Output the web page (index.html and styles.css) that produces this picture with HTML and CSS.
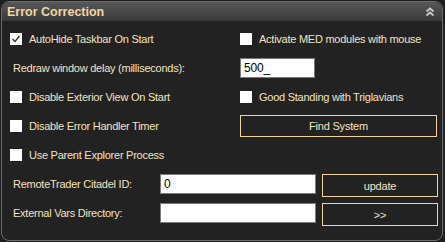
FILE: index.html
```html
<!DOCTYPE html>
<html lang="en">
<head>
    <meta charset="UTF-8">
    <title>Error Correction</title>
    <link rel="stylesheet" href="styles.css">
</head>
<body>
    <div class="panel">
        <div class="panel-head">
            <span class="title">Error Correction</span>
            <svg class="collapse" width="10" height="10" viewBox="0 0 10 10">
                <path d="M1.5 4.5 L5 1.5 L8.5 4.5 M1.5 8.5 L5 5.5 L8.5 8.5" fill="none" stroke="#c8c8c8" stroke-width="1.8"/>
            </svg>
        </div>

        <div class="panel-body">
            <div class="row">
                <label class="check left"><span class="box checked">
                    <svg width="12" height="12" viewBox="0 0 12 12"><path d="M2.5 6 L5 8.5 L9.5 3" fill="none" stroke="#333" stroke-width="1.3"/></svg>
                </span>AutoHide Taskbar On Start</label>
                <label class="check right"><span class="box"></span>Activate MED modules with mouse</label>
            </div>

            <div class="row">
                <span class="label left">Redraw window delay (milliseconds):</span>
                <div class="right"><input class="field small" type="text" value="500_"></div>
            </div>

            <div class="row">
                <label class="check left"><span class="box"></span>Disable Exterior View On Start</label>
                <label class="check right"><span class="box"></span>Good Standing with Triglavians</label>
            </div>

            <div class="row">
                <label class="check left"><span class="box"></span>Disable Error Handler Timer</label>
                <div class="right"><button class="btn wide">Find System</button></div>
            </div>

            <div class="row">
                <label class="check left"><span class="box"></span>Use Parent Explorer Process</label>
            </div>

            <div class="row row-top">
                <span class="label label-short">RemoteTrader Citadel ID:</span>
                <input class="field long" type="text" value="0">
                <button class="btn short">update</button>
            </div>

            <div class="row row-top">
                <span class="label label-short">External Vars Directory:</span>
                <input class="field long" type="text" value="">
                <button class="btn short">&gt;&gt;</button>
            </div>
        </div>
    </div>
</body>
</html>
```

FILE: styles.css
```css
* {
    margin: 0;
    box-sizing: border-box;
}

body {
    background-color: #1e1e1e;
    font-family: 'Liberation Sans', Arial, sans-serif;
    font-size: 11px;
    letter-spacing: -0.25px;
    color: #f4e2c4;
}

.panel {
    margin: 1px 0 0 1px;
    width: 442px;
    height: 240px;
    border: 1px solid #6c6c6c;
    border-radius: 8px;
    background-color: #222222;
    overflow: hidden;
}

.panel-head {
    height: 19px;
    display: flex;
    align-items: center;
    justify-content: space-between;
    padding: 0 7px 0 5px;
    background: linear-gradient(#575757, #3a3a3a);
    border-radius: 8px 8px 0 0;
}

.title {
    font-size: 12.5px;
    font-weight: bold;
    letter-spacing: 0;
    color: #f3d5a2;
    padding-top: 1px;
}

.collapse {
    display: block;
}

.panel-body {
    padding: 3px 0 0 8px;
}

.row {
    height: 29px;
    display: flex;
    align-items: center;
}

.row-top {
    align-items: flex-start;
    padding-top: 5px;
}

.row-top .label {
    line-height: 20px;
}

.left {
    width: 230px;
}

.right {
    display: flex;
    align-items: center;
}

.check {
    display: flex;
    align-items: center;
    gap: 7px;
}

.box {
    width: 12px;
    height: 12px;
    background-color: #ffffff;
    display: flex;
    align-items: center;
    justify-content: center;
}

.label {
    padding-left: 3px;
}

.label-short {
    width: 150px;
}

.field {
    height: 20px;
    border: 1px solid #7c7c7c;
    background-color: #ffffff;
    font-family: 'Liberation Sans', Arial, sans-serif;
    font-size: 12px;
    letter-spacing: -0.2px;
    color: #000000;
    padding: 0 3px;
    outline: none;
}

.small {
    width: 75px;
}

.long {
    width: 156px;
}

.btn {
    height: 23px;
    border: 1px solid #f4d49c;
    background-color: #222222;
    color: #f4e2c4;
    font-family: 'Liberation Sans', Arial, sans-serif;
    font-size: 11px;
    letter-spacing: -0.2px;
}

.wide {
    width: 197px;
    height: 22px;
}

.short {
    width: 116px;
    margin-left: 6px;
}
```
